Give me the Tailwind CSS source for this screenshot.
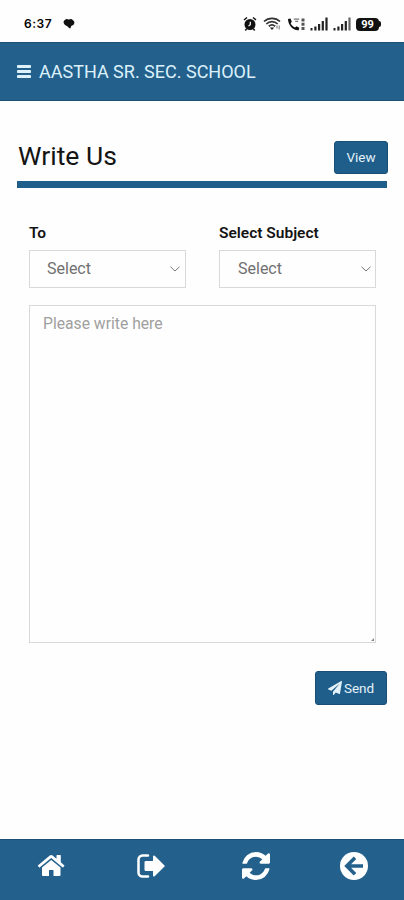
<!DOCTYPE html>
<html lang="en">
<head>
    <meta charset="UTF-8">
    <meta name="viewport" content="width=device-width, initial-scale=1.0">
    <title>Write Us</title>
    <script src="https://cdn.jsdelivr.net/npm/@tailwindcss/browser@4"></script>
</head>
<body class="bg-[#fefefe] h-[900px] flex flex-col overflow-hidden font-['Roboto',sans-serif] text-[#141414]">

    <!-- Status bar -->
    <div class="h-[42px] shrink-0 flex items-center pl-6 pr-[23px] pt-[6px] text-black">
        <span class="font-['Inter',sans-serif] text-[12px] leading-4 font-semibold tracking-[0.5px] w-[39px]">6:37</span>
        <svg class="w-3 h-3" viewBox="0 0 12 12" fill="#111"><path d="M3 1.200C4 .5 5 1.600 6 1.400s2-.8 3 0 2.400 1.400 2.400 3-1 2.600-2.400 3.200-.6 1.800-1.800 2.800C5.400 10 5 8.600 3.800 8S.8 6.200.6 4.400 1.800 2 3 1.200z"/></svg>
        <div class="ml-auto flex items-center">
            <svg class="w-[14px] h-4" viewBox="0 0 14 16"><circle cx="7" cy="8.500" r="5.500" fill="#111"/><path d="M1 4l3-2.500M13 4l-3-2.500M3.500 13L2.300 14.500M10.500 13l1.200 1.500" stroke="#111" stroke-width="1.500" fill="none"/><path d="M7.300 5.800v3L5.500 10" stroke="#fff" stroke-width="1.200" fill="none"/></svg>
            <svg class="w-[18px] h-4 ml-[6px]" viewBox="0 0 18 16" fill="none" stroke="#333" stroke-width="1.700"><path d="M1 5.500c4.500-4.300 11.500-4.300 16 0M3.300 8c3.300-3.100 8.100-3.100 11.400 0M5.800 10.300c1.900-1.700 4.500-1.700 6.400 0"/><path d="M9 14l-2.200-2.600h4.400z" fill="#222" stroke="none"/><path d="M14 12.500V9.500M16.200 9.500v4" stroke="#777" stroke-width="1"/></svg>
            <svg class="w-[19px] h-4 ml-[6px]" viewBox="0 0 19 16"><path d="M1 3l2.500-.5 1.300 3.300-1.100 1.400c.8 2 2.300 3.400 4.300 4.300L9.500 10.300l2.800 1.500-.6 2.400C6 14.800 1 9 1 3z" fill="#111"/><path d="M6.800 3.200h5.400M8.200 5.400h3" stroke="#777" stroke-width="1.300" fill="none"/><path d="M14.500 2.500h3v3h-3zM14.500 6.700h3v3h-3zM14.500 11h3v3h-3z" fill="#555"/></svg>
            <svg class="w-[18px] h-4 ml-1" viewBox="0 0 18 16" fill="#222"><path d="M.5 12h2v2.500h-2zM4.300 10.500h2.200v4H4.300zM8 8h2.200v6.500H8zM11.700 5h2.200v9.500h-2.200zM15.400 1.500h2.200v13h-2.200z"/></svg>
            <svg class="w-[18px] h-4 ml-[5px]" viewBox="0 0 18 16" fill="#222"><path d="M.5 12h2v2.500h-2zM4.300 10.500h2.200v4H4.300zM8 8h2.200v6.500H8zM11.700 5h2.200v9.500h-2.200z"/><path d="M15.400 1.500h2.200v13h-2.200z" fill="#666"/></svg>
            <span class="ml-[5px] w-[23px] h-[13px] rounded-[4px] bg-[#111] text-white text-[11px] leading-[13px] font-bold text-center">99</span>
            <span class="w-[2px] h-[6px] rounded-r bg-[#111]"></span>
        </div>
    </div>

    <!-- Header -->
    <header class="h-[59px] shrink-0 bg-[#23618c] border-y border-[#1b5175] flex items-center pl-[17px] text-[#dcf1fb]">
        <svg class="w-[14px] h-[13px]" viewBox="0 0 14 13" fill="currentColor"><rect y="0" width="14" height="3" rx=".7"/><rect y="5" width="14" height="3" rx=".7"/><rect y="10" width="14" height="3" rx=".7"/></svg>
        <h1 class="ml-2 text-[18px] leading-6 whitespace-nowrap">AASTHA SR. SEC. SCHOOL</h1>
    </header>

    <main class="flex-1 px-[17px] pt-10">
        <!-- Title -->
        <div class="h-[47px] border-b-[7px] border-[#1f5e8b] flex justify-between items-start">
            <h2 class="pl-px text-[26.5px] leading-[30px]">Write Us</h2>
            <button class="w-[54px] h-[33px] mr-[-1px] rounded-[3px] bg-[#1f5e8b] border border-[#194f76] text-[#e4f2f9] text-[13.5px]">View</button>
        </div>

        <!-- Form -->
        <form class="pl-3 pr-[11px] pt-9">
            <div class="grid grid-cols-2 gap-x-[33px]">
                <div>
                    <label class="block text-[15.5px] leading-[18px] font-semibold">To</label>
                    <div class="mt-2 h-[38px] border border-[#d9d9d9] flex items-center justify-between pl-[17px] pr-[5px] text-[#707070] text-[16px]">
                        <span>Select</span>
                        <svg class="w-[10px] h-[6px]" viewBox="0 0 10 6" fill="none" stroke="#777"><path d="M.5.8L5 5 9.500.8"/></svg>
                    </div>
                </div>
                <div>
                    <label class="block text-[15.5px] leading-[18px] font-semibold">Select Subject</label>
                    <div class="mt-2 h-[38px] border border-[#d9d9d9] flex items-center justify-between pl-[18px] pr-[4px] text-[#707070] text-[16px]">
                        <span>Select</span>
                        <svg class="w-[10px] h-[6px]" viewBox="0 0 10 6" fill="none" stroke="#777"><path d="M.5.8L5 5 9.500.8"/></svg>
                    </div>
                </div>
            </div>
            <div class="relative mt-[17px]">
                <textarea class="block w-full h-[338px] border border-[#d9d9d9] px-[13px] py-2 text-[15.7px] leading-5 placeholder:text-[#a0a0a0] resize-none" placeholder="Please write here"></textarea>
                <svg class="absolute right-[2px] bottom-[2px] w-[3px] h-[3px]" viewBox="0 0 3 3"><path d="M3 0v3H0z" fill="#888"/></svg>
            </div>
        </form>
        <div class="flex justify-end mt-7">
            <button class="w-[72px] h-[34px] rounded-[3px] bg-[#1f5e8b] border border-[#194f76] text-[#e4f2f9] text-[13.5px] flex items-center justify-center gap-[2px]">
                <svg class="w-[14px] h-[14px]" viewBox="0 0 1792 1792" fill="currentColor"><path d="M1764 11q33 24 27 64l-256 1536q-5 29-32 45-14 8-31 8-11 0-24-5l-453-185-242 295q-18 23-49 23-13 0-22-4-19-7-30.500-23.500t-11.500-36.500v-349l864-1059-1069 925-395-162q-37-14-40-55-2-40 32-59l1664-960q15-9 32-9 20 0 36 11z"/></svg>
                Send
            </button>
        </div>
    </main>

    <!-- Bottom navigation -->
    <nav class="h-[61px] shrink-0 bg-[#23618c] border-t border-[#1b5175] flex items-start pl-[37px] pt-3 text-white">
        <svg class="w-7 h-7" viewBox="0 0 28 28" fill="currentColor"><path d="M23.500 15.500V23a1 1 0 0 1-1 1h-6v-6h-4.500v6h-6a1 1 0 0 1-1-1v-7.500l9.200-7.600z"/><path d="M27.300 14.100l-1 1.100q-.4.400-.9.100L14.200 6 2.900 15.300q-.5.300-.9-.1l-1-1.100q-.4-.5.100-.9L12.800 3.500q1.400-1 2.800 0l3.900 3.300V3.600q0-.6.600-.6h3.100q.6 0 .6.600v6.600l3.400 3q.5.400.1.900z"/></svg>
        <svg class="w-7 h-7 ml-[72px]" viewBox="0 0 28 28"><path d="M11 3.500H5.500a4 4 0 0 0-4 4v13a4 4 0 0 0 4 4H11" fill="none" stroke="currentColor" stroke-width="2.500" stroke-linecap="round"/><path d="M28 14L17.700 24.200q-1.400 1-1.700-.7v-4.500H8.800q-1.300 0-1.300-1.300v-7.400Q7.500 9 8.800 9H16V4.500q.3-1.700 1.700-.7z" fill="currentColor"/></svg>
        <svg class="w-7 h-7 ml-[77px]" viewBox="128 128 1536 1536" fill="currentColor"><path d="M1639 1056q0 5-1 7-64 268-268 434.500t-478 166.500q-146 0-282.500-55t-243.500-157l-129 129q-19 19-45 19t-45-19-19-45v-448q0-26 19-45t45-19h448q26 0 45 19t19 45-19 45l-137 137q71 66 161 102t187 36q134 0 250-65t186-179q11-17 53-117 8-23 30-23h192q13 0 22.500 9.500t9.500 22.500zm25-800v448q0 26-19 45t-45 19h-448q-26 0-45-19t-19-45 19-45l138-138q-148-137-349-137-134 0-250 65t-186 179q-11 17-53 117-8 23-30 23h-199q-13 0-22.500-9.500t-9.500-22.500v-7q65-268 270-434.500t480-166.500q146 0 284 55.500t245 156.500l130-129q19-19 45-19t45 19 19 45z"/></svg>
        <svg class="w-7 h-7 ml-[70px]" viewBox="0 0 28 28"><circle cx="14" cy="14" r="14" fill="currentColor"/><path d="M15 5.800L6.800 14l8.200 8.200M7.500 14H23" fill="none" stroke="#23618c" stroke-width="3.600"/></svg>
    </nav>
</body>
</html>
